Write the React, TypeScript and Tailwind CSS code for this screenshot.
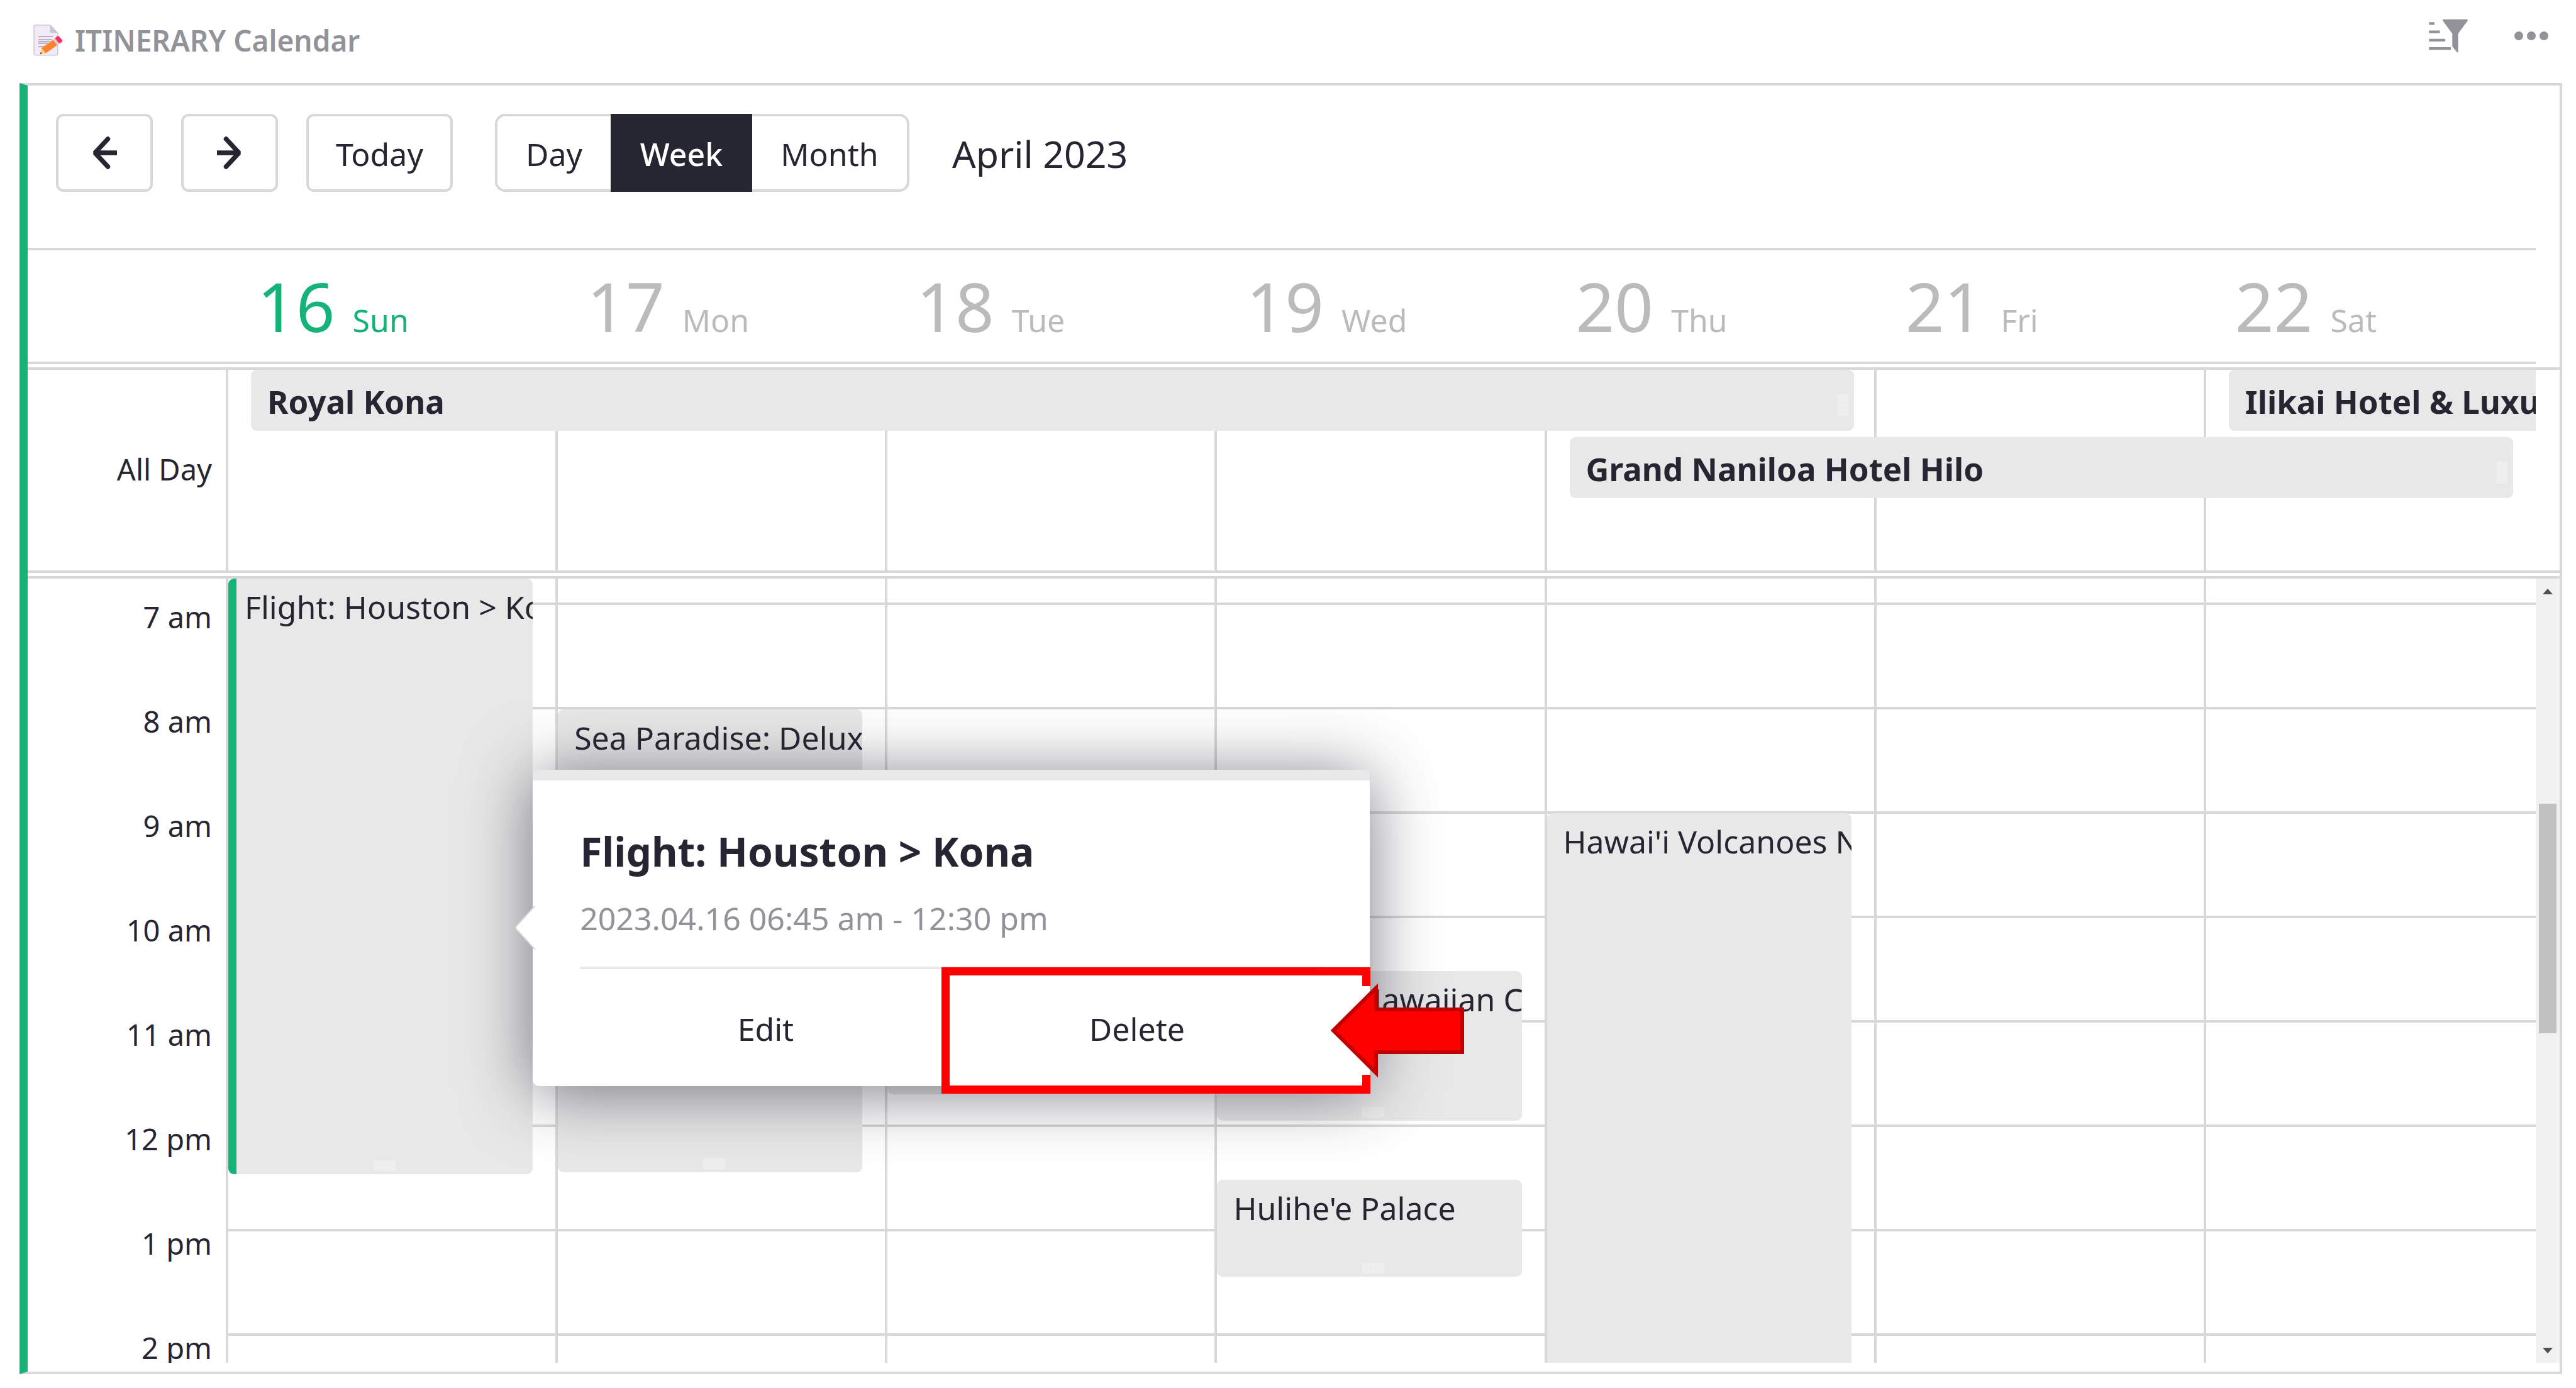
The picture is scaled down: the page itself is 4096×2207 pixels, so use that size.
import React from "react";

const days = [
  { num: 16, name: "Sun" },
  { num: 17, name: "Mon" },
  { num: 18, name: "Tue" },
  { num: 19, name: "Wed" },
  { num: 20, name: "Thu" },
  { num: 21, name: "Fri" },
  { num: 22, name: "Sat" },
];

const hours = ["7 am", "8 am", "9 am", "10 am", "11 am", "12 pm", "1 pm", "2 pm"];

type TimedEvent = { title: string; top: number; height: number; accent?: boolean };

/* Offsets in pixels from the top of the visible hours. */
const eventsByDay: Record<number, TimedEvent[]> = {
  16: [{ title: "Flight: Houston > Kona", top: 0, height: 947, accent: true }],
  17: [{ title: "Sea Paradise: Deluxe Snorkel", top: 208, height: 736 }],
  18: [{ title: "", top: 624, height: 196 }],
  19: [
    { title: "Famous Hawaiian Culture", top: 624, height: 238 },
    { title: "Hulihe'e Palace", top: 956, height: 154 },
  ],
  20: [{ title: "Hawai'i Volcanoes National Park", top: 373, height: 1000 }],
};

function NoteIcon() {
  return (
    <svg className="h-[50px] w-[47px]" viewBox="173 127 150 160" aria-hidden="true">
      <path d="M184 130h74l39 40v105q0 8-8 8H184q-8 0-8-8V138q0-8 8-8z" fill="#f1ebf8" stroke="#c9c0d2" strokeWidth="4" />
      <path d="M258 130l39 40h-31q-8 0-8-8z" fill="#cdc3d8" />
      <path d="M198 188h76" stroke="#998ea4" strokeWidth="4" />
      <path d="M198 204h70M198 222h50" stroke="#b3a8be" strokeWidth="6" />
      <path d="M198 213h60M198 239h30" stroke="#998ea4" strokeWidth="4" />
      <path d="M214 247l59-42 22 27-59 41z" fill="#ff822d" />
      <path d="M214 247l22 26-28 5z" fill="#ffce7c" />
      <path d="M211 265l6 10-10 3z" fill="#533566" />
      <path d="M273 205l10-8 22 27-10 8z" fill="#d3cbda" />
      <path d="M283 197l10-10q6-4 11 1l15 17q4 6-1 11l-13 8z" fill="#f92f60" />
    </svg>
  );
}

function SortFilterIcon() {
  return (
    <svg className="h-[54px] w-[62px]" viewBox="204 98 201 173" fill="#929299" aria-hidden="true">
      <path d="M205 114h28v14h-28zM205 157h56v14h-56zM205 200h84v14h-84zM205 243h113v14H205z" />
      <path d="M276 99h128v8l-49 66v97h-5l-25-30v-67l-49-66z" />
    </svg>
  );
}

function MoreIcon() {
  return (
    <svg className="h-[14px] w-[54px]" viewBox="0 0 54 14" fill="#929299" aria-hidden="true">
      <circle cx="7" cy="7" r="7" />
      <circle cx="27" cy="7" r="7" />
      <circle cx="47" cy="7" r="7" />
    </svg>
  );
}

function NavArrow({ flip = false }: { flip?: boolean }) {
  return (
    <svg
      className={flip ? "h-[52px] w-[40px] -scale-x-100" : "h-[52px] w-[40px]"}
      viewBox="0 0 40 52"
      fill="none"
      stroke="#262633"
      strokeWidth="7.5"
      aria-hidden="true"
    >
      <path d="M25.500 4L5 26l20.500 22" strokeLinecap="round" strokeLinejoin="bevel" />
      <path d="M4 26h36" />
    </svg>
  );
}

function Grip({ vertical = false }: { vertical?: boolean }) {
  return vertical ? (
    <svg className="mr-[9px] h-[35px] w-[17px] shrink-0" viewBox="0 0 17 35" aria-hidden="true">
      <path d="M0 0h17v35H0z" fill="#efefef" />
      <path d="M8.500 0v35M0 7h17M0 14h17M0 21h17M0 28h17" stroke="#ebebeb" />
    </svg>
  ) : (
    <svg className="mb-[5px] mr-[13px] h-[17px] w-[35px] shrink-0" viewBox="0 0 35 17" aria-hidden="true">
      <path d="M0 0h35v17H0z" fill="#efefef" />
      <path d="M0 8.500h35M7 0v17M14 0v17M21 0v17M28 0v17" stroke="#ebebeb" />
    </svg>
  );
}

function TimedCard({ event }: { event: TimedEvent }) {
  return (
    <div
      className={
        event.accent
          ? "absolute left-0 right-[36px] flex flex-col items-center justify-between overflow-hidden rounded-[9px] border-l-[13px] border-[#16b378] bg-[#e8e8e8] pl-[13px]"
          : "absolute left-0 right-[36px] flex flex-col items-center justify-between overflow-hidden rounded-[9px] bg-[#e8e8e8] pl-[26px]"
      }
      style={{ top: event.top, height: event.height }}
    >
      <span className="w-full whitespace-nowrap pt-[15px] leading-[60px]">{event.title}</span>
      <Grip />
    </div>
  );
}

function Callout() {
  return (
    <>
      <div className="pointer-events-none absolute bottom-[-12px] right-[-1px] flex h-[201px] w-[682px] flex-col border-y-[13px] border-l-[13px] border-[#ff0000]">
        <div className="ml-auto h-[17px] w-[13px] bg-[#ff0000]" />
        <div className="flex-1" />
        <div className="ml-auto h-[17px] w-[13px] bg-[#ff0000]" />
      </div>
      <svg
        className="pointer-events-none absolute bottom-[13px] right-[-150px] h-[151px] w-[212px]"
        viewBox="0 0 212 151"
        aria-hidden="true"
      >
        <path
          d="M4 75.500L72 8v34h137v68H72v33z"
          fill="#ff0000"
          stroke="#c00000"
          strokeWidth="6"
          strokeMiterlimit="10"
        />
      </svg>
    </>
  );
}

function EventPopup() {
  return (
    <div
      role="dialog"
      aria-label="Event details"
      className="absolute left-[calc(100%-36px)] top-[304px] z-20 w-[1331px] rounded-[10px] bg-white shadow-[0_9px_106px_rgba(38,38,51,0.6)]"
    >
      <div className="h-[17px] rounded-t-[6px] bg-[#e8e8e8]" />
      <svg className="absolute left-[-28px] top-[216px] h-[70px] w-[32px]" viewBox="0 0 32 70" aria-hidden="true">
        <path d="M32 0L0 35l32 35" fill="#ffffff" stroke="#d8d8d8" strokeWidth="2" />
      </svg>
      <div className="px-[75px] pt-[73px]">
        <h2 className="text-[64px] font-bold leading-[80px]">Flight: Houston &gt; Kona</h2>
        <p className="mt-[31px] leading-[70px] text-[#929299]">2023.04.16 06:45 am - 12:30 pm</p>
        <div className="mt-[42px] grid h-[190px] grid-cols-2 border-t-4 border-[#e8e8e8]">
          <button type="button" className="pt-1">
            Edit
          </button>
          <button type="button" className="pt-1">
            Delete
          </button>
        </div>
      </div>
      <Callout />
    </div>
  );
}

const outlineButton =
  "flex h-[124px] items-center justify-center rounded-[12px] border-4 border-[#d8d8d8] bg-white";

export default function App() {
  return (
    <div className="flex h-screen flex-col overflow-hidden bg-white pb-[22px] pl-[31px] pr-[22px] font-['Noto_Sans','Open_Sans',sans-serif] text-[50px] leading-[60px] text-[#262633]">
      <header className="flex h-[132px] shrink-0 items-center justify-between pl-[22px] pr-[22px]">
        <div className="flex items-center gap-[19px] pb-1">
          <NoteIcon />
          <h1 className="text-[46px] font-semibold text-[#929299]">ITINERARY Calendar</h1>
        </div>
        <div className="flex items-center gap-[74px] pb-[18px]">
          <button type="button" aria-label="Sort and filter">
            <SortFilterIcon />
          </button>
          <button type="button" aria-label="More options" className="flex items-center">
            <MoreIcon />
          </button>
        </div>
      </header>

      <main className="flex min-h-0 flex-1 flex-col border-y-4 border-l-[13px] border-r-4 border-y-[#d8d8d8] border-l-[#16b378] border-r-[#d8d8d8] pb-[14px]">
        <div className="flex h-[258px] shrink-0 items-start pl-[45px] pt-[45px]">
          <div className="flex gap-[45px]">
            <button type="button" aria-label="Previous" className={`${outlineButton} w-[154px]`}>
              <NavArrow />
            </button>
            <button type="button" aria-label="Next" className={`${outlineButton} w-[154px]`}>
              <NavArrow flip />
            </button>
            <button type="button" className={`${outlineButton} w-[233px] pt-1`}>
              Today
            </button>
          </div>
          <div className="ml-[67px] flex h-[124px]">
            <button type="button" className="w-[184px] rounded-l-[16px] border-y-4 border-l-4 border-[#d8d8d8] pt-1">
              Day
            </button>
            <button type="button" aria-pressed="true" className="w-[225px] bg-[#262633] pt-1 font-medium text-white">
              Week
            </button>
            <button type="button" className="w-[250px] rounded-r-[16px] border-y-4 border-r-4 border-[#d8d8d8] pt-1">
              Month
            </button>
          </div>
          <div className="ml-[68px] text-[59px] leading-[126px]">April 2023</div>
        </div>

        <div className="mr-[38px] flex h-[185px] shrink-0 border-y-4 border-[#d8d8d8] pl-[319px]">
          <div className="grid flex-1 grid-cols-7">
            {days.map((day, i) => (
              <div
                key={day.num}
                className={
                  i === 0
                    ? "flex items-baseline gap-[28px] pl-[46px] text-[#16b378]"
                    : "flex items-baseline gap-[28px] pl-[46px] text-[#bbbbbb]"
                }
              >
                <span className="text-[108px] leading-[178px]">{day.num}</span>
                <span>{day.name}</span>
              </div>
            ))}
          </div>
        </div>

        <div className="mt-[5px] flex h-[327px] shrink-0 border-y-4 border-[#d8d8d8] pr-[38px]">
          <div className="flex w-[319px] items-center justify-end border-r-4 border-[#d8d8d8] pb-1 pr-[22px] text-[47px]">
            All Day
          </div>
          <div className="grid min-w-0 flex-1 grid-cols-7 grid-rows-[97px_97px_1fr] gap-y-[10px] text-[51px] font-bold">
            {days.map((day, i) => (
              <div
                key={day.num}
                className={
                  i === days.length - 1 ? "row-span-full" : "row-span-full border-r-4 border-[#d8d8d8]"
                }
                style={{ gridColumn: i + 1 }}
              />
            ))}
            <div className="col-start-1 col-end-6 row-start-1 mx-[36px] flex items-center justify-between rounded-[9px] bg-[#e8e8e8] pl-[26px] pt-[2px]">
              Royal Kona
              <div className="pt-[14px]">
                <Grip vertical />
              </div>
            </div>
            <div className="col-start-5 col-end-8 row-start-2 mx-[36px] flex items-center justify-between rounded-[9px] bg-[#e8e8e8] pl-[26px] pt-[2px]">
              Grand Naniloa Hotel Hilo
              <div className="pt-[14px]">
                <Grip vertical />
              </div>
            </div>
            <div className="col-start-7 row-start-1 ml-[36px] flex items-center overflow-hidden whitespace-nowrap rounded-l-[9px] bg-[#e8e8e8] pl-[26px] pt-[2px]">
              Ilikai Hotel &amp; Luxury Suites
            </div>
          </div>
        </div>

        <div className="mt-[5px] flex min-h-0 flex-1 overflow-hidden border-t-4 border-[#d8d8d8]">
          <div className="w-[319px] shrink-0 border-r-4 border-[#d8d8d8] pr-[22px] pt-[41px] text-right text-[47px]">
            {hours.map((hour) => (
              <div key={hour} className="h-[166px] leading-[40px]">
                {hour}
              </div>
            ))}
          </div>
          <div className="grid min-w-0 flex-1 grid-cols-7">
            {days.map((day, i) => (
              <div
                key={day.num}
                className={i === days.length - 1 ? "relative" : "relative border-r-4 border-[#d8d8d8]"}
              >
                <div className="h-[42px] border-b-4 border-[#d8d8d8]" />
                {hours.slice(1).map((hour) => (
                  <div key={hour} className="h-[166px] border-b-4 border-[#d8d8d8]" />
                ))}
                {(eventsByDay[day.num] ?? []).map((event) => (
                  <TimedCard key={event.top} event={event} />
                ))}
                {i === 0 && <EventPopup />}
              </div>
            ))}
          </div>
          <div className="flex w-[38px] shrink-0 flex-col items-center bg-[#f1f1f1]">
            <svg className="mt-[16px] h-[9px] w-[16px] shrink-0" viewBox="0 0 16 9" aria-hidden="true">
              <path d="M0 9l8-9 8 9z" fill="#505050" />
            </svg>
            <div className="mt-[333px] h-[365px] w-[28px] shrink-0 bg-[#c1c1c1]" />
            <svg className="mb-[15px] mt-auto h-[9px] w-[16px] shrink-0" viewBox="0 0 16 9" aria-hidden="true">
              <path d="M0 0l8 9 8-9z" fill="#505050" />
            </svg>
          </div>
        </div>
      </main>
    </div>
  );
}
